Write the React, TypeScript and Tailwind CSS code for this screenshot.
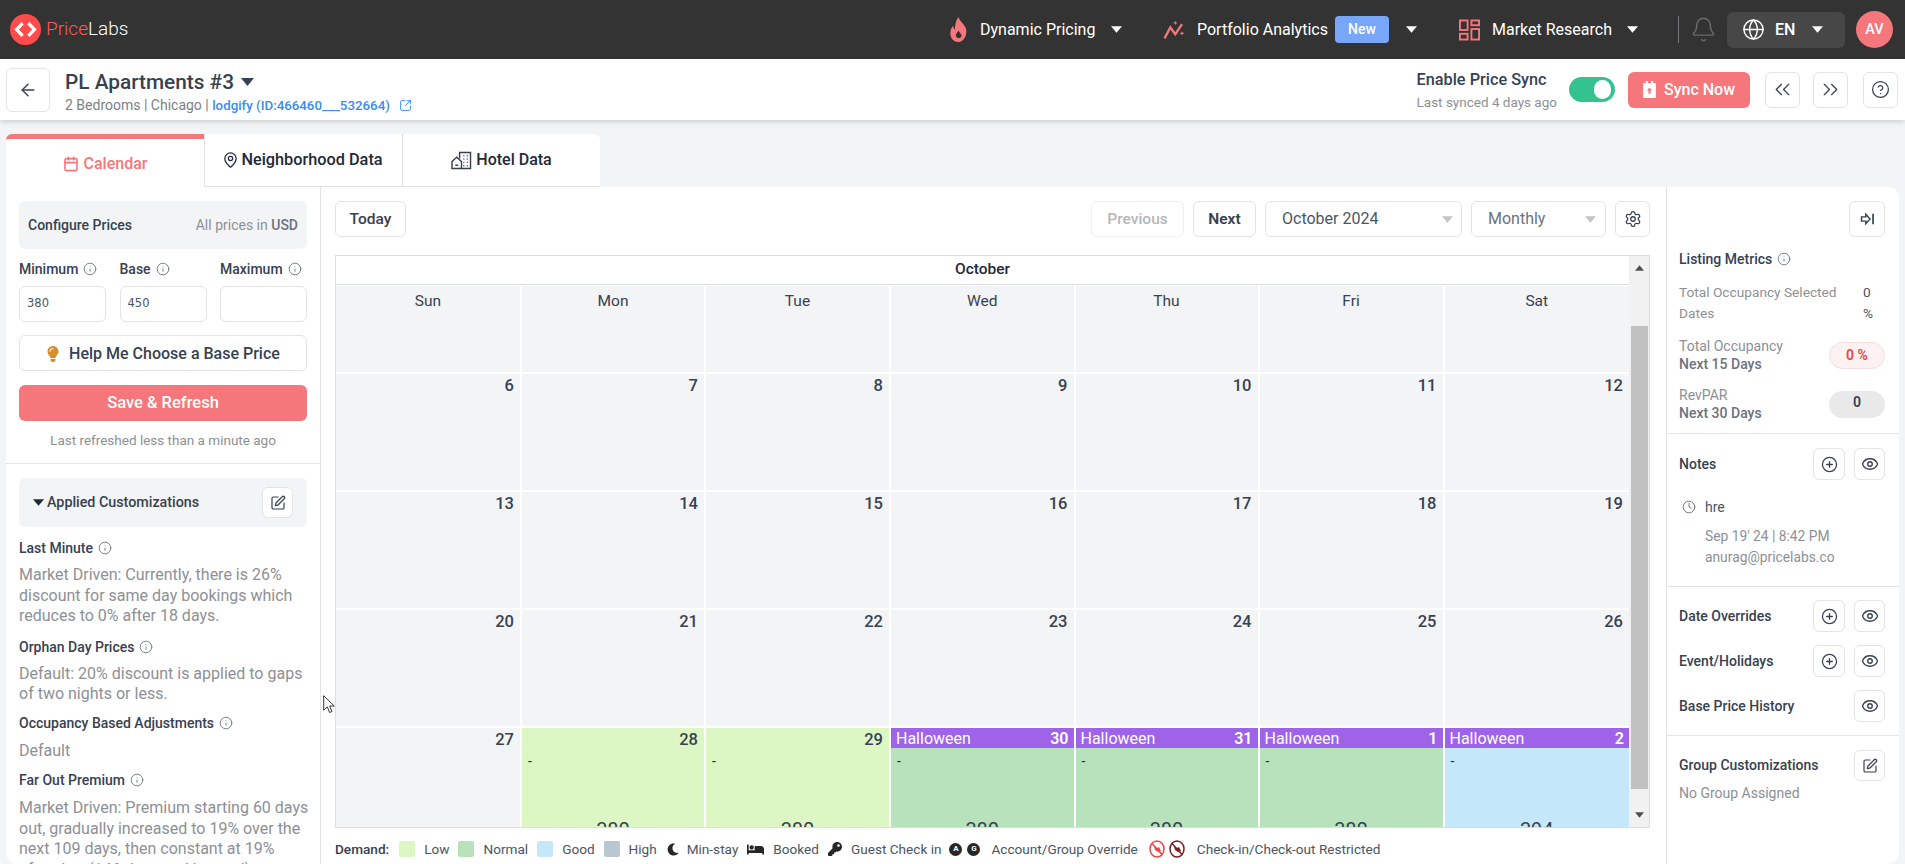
import React from "react";
import { ArrowLeft, SquareArrowOutUpRight, Calendar, MapPin, Info, SquarePen, Bell, Globe, ChevronsLeft, ChevronsRight, CircleHelp, Settings, CirclePlus, Eye, Clock } from "lucide-react";
import { FaLightbulb, FaMoon, FaBed, FaKey } from "react-icons/fa";

const Caret = ({ className = "" }: { className?: string }) => (
  <svg viewBox="0 0 10 6" className={`h-[7px] w-[11px] ${className}`} fill="currentColor"><polygon points="0,0 10,0 5,6" /></svg>
);

const Btn = ({ children, className = "" }: { children?: React.ReactNode; className?: string }) => (
  <div className={`flex items-center justify-center rounded-md border border-[#e2e3e5] bg-white text-[#374151] ${className}`}>{children}</div>
);

const InfoI = ({ className = "" }: { className?: string }) => <Info className={`h-[14px] w-[14px] text-[#6b7280] ${className}`} strokeWidth={1.5} />;

const Label = ({ children, info = true, className = "" }: { children: React.ReactNode; info?: boolean; className?: string }) => (
  <div className={`flex items-center gap-[5px] text-[14px] font-medium leading-[18px] text-[#374151] ${className}`}>
    <span>{children}</span>
    {info && <InfoI />}
  </div>
);

const Para = ({ children, className = "" }: { children: React.ReactNode; className?: string }) => (
  <p className={`whitespace-nowrap text-[16px] leading-[20.5px] text-[#8d9096] ${className}`}>{children}</p>
);

const PriceInput = ({ value }: { value?: string }) => (
  <div className="flex h-[36px] w-[87px] items-center rounded-md border border-[#e2e3e5] pl-[7px] font-['DejaVu_Sans',sans-serif] text-[11.5px] text-[#4b5563]">{value}</div>
);

const AddBtn = () => (
  <Btn className="h-[32px] w-[32px]"><CirclePlus className="h-[17px] w-[17px]" strokeWidth={1.8} /></Btn>
);
const EyeBtn = () => (
  <Btn className="h-[32px] w-[31px]"><Eye className="h-[18px] w-[18px]" strokeWidth={1.8} /></Btn>
);

type Cell = { n?: number; bg?: string; holiday?: boolean; price?: string };
const gray = "bg-[#f3f4f6]";
const low = "bg-[#ddf7c4]";
const normal = "bg-[#b8e2bb]";
const good = "bg-[#c5e7fa]";

const weeks: Cell[][] = [
  [6, 7, 8, 9, 10, 11, 12].map((n) => ({ n })),
  [13, 14, 15, 16, 17, 18, 19].map((n) => ({ n })),
  [20, 21, 22, 23, 24, 25, 26].map((n) => ({ n })),
  [
    { n: 27 },
    { n: 28, bg: low, price: "380" },
    { n: 29, bg: low, price: "380" },
    { n: 30, bg: normal, holiday: true, price: "380" },
    { n: 31, bg: normal, holiday: true, price: "380" },
    { n: 1, bg: normal, holiday: true, price: "380" },
    { n: 2, bg: good, holiday: true, price: "394" },
  ],
];

const DayCell = ({ c }: { c: Cell }) => (
  <div className={`overflow-hidden ${c.bg ?? gray}`}>
    {c.holiday ? (
      <div className="flex h-[20px] items-center justify-between bg-[#9f63ea] pl-[5px] pr-[5px] pt-[1px] text-[16px] text-white">
        <span>Halloween</span>
        <span className="font-semibold">{c.n}</span>
      </div>
    ) : (
      <div className="h-[20px] pr-[6px] pt-[1px] text-right text-[16.5px] font-medium leading-[22px] text-[#374151]">{c.n}</div>
    )}
    {c.price && (
      <>
        <div className="h-[18px] pl-[6px] pt-[4px] text-[14px] leading-[18px] text-[#1f2937]">-</div>
        <div className="mt-[52px] text-center text-[20px] leading-[24px] text-[#374151]">{c.price}</div>
      </>
    )}
  </div>
);

const Swatch = ({ className }: { className: string }) => <span className={`h-[16px] w-[16px] rounded-[2px] ${className}`} />;

const Logo = () => (
  <svg viewBox="0 0 32 32" className="h-[31px] w-[31px]">
    <circle cx="16" cy="16" r="16" fill="#ff4b4b" />
    <path d="M13 9.500 6.800 16l6.200 6.500" fill="none" stroke="#fff" strokeWidth="3.400" />
    <path d="M19 9.500 25.200 16 19 22.500" fill="none" stroke="#fff" strokeWidth="3.400" />
  </svg>
);

const FlameIcon = () => (
  <svg viewBox="0 0 20 28" className="h-[25px] w-[19px]" fill="#f5767b">
    <path d="M10 0c1 5 7 8 8.500 13.500C20 20 16 28 10 28S0 23 1 16c.4-3 2-5 3-6 .3 2 1 3.500 2 4C6 9 7 4 10 0Zm0 15c-1 2-3 3.500-3 6a3.300 3.300 0 0 0 6.500 0c0-2.500-2.500-3.500-3.500-6Z" fillRule="evenodd" />
  </svg>
);
const SparkIcon = () => (
  <svg viewBox="0 0 26 24" className="h-[20px] w-[25px]" fill="none" stroke="#f5767b" strokeWidth="2.800">
    <path d="M1 22 8 9l6 8 8-12" />
    <path d="M14 1.500v4M12 3.500h4M22 14v4M20 16h4" strokeWidth="1.300" />
  </svg>
);
const MarketIcon = () => (
  <svg viewBox="0 0 22 22" className="h-[22px] w-[21px]" fill="none" stroke="#f5767b" strokeWidth="2">
    <rect x="1" y="1" width="8" height="10" />
    <rect x="13" y="1" width="8" height="5" />
    <rect x="1" y="15" width="8" height="6" />
    <rect x="13" y="10" width="8" height="11" />
  </svg>
);
const HotelIcon = () => (
  <svg viewBox="0 0 22 20" className="h-[19px] w-[21px]" fill="none" stroke="#374151" strokeWidth="1.500">
    <path d="M1 18.500V11l5-4.500L11 11v7.500Z" />
    <path d="M9 8V1.500h11.500v17H11" />
    <path d="M13 5h1M16.500 5h1M13 8.500h1M16.500 8.500h1M13 12h1M16.500 12h1M13 15.500h1M16.500 15.500h1M4.500 15h3" />
  </svg>
);
const CollapseIcon = () => (
  <svg viewBox="0 0 16 14" className="h-[12px] w-[15px]" fill="none" stroke="#374151" strokeWidth="1.700">
    <path d="M1 4.500h5V1.500L11 7l-5 5.500V9.500H1Z" />
    <path d="M14.500 1v12" strokeWidth="2" />
  </svg>
);
const SyncIcon = () => (
  <svg viewBox="0 0 12 16" className="h-[17px] w-[13px]">
    <path d="M2.500 0h2v2h3V0h2v2H12v14H0V2h2.500Z" fill="#fff" />
    <path d="M6 6 3.500 9H5v3h2V9h1.500Z" fill="#f5767b" />
  </svg>
);
const NoIcon = ({ color }: { color: string }) => (
  <svg viewBox="0 0 16 18" className="h-[18px] w-[16px]" fill="none" stroke={color} strokeWidth="1.500">
    <ellipse cx="8" cy="9" rx="7" ry="8" />
    <path d="M3 3.500l10 11" />
    <path d="M5 6l3 2 2-1 2 4-3 1-3-2Z" fill={color} stroke="none" />
  </svg>
);
const Letter = ({ l }: { l: string }) => (
  <span className="flex h-[13px] w-[13px] items-center justify-center rounded-full bg-[#27272a] text-[8px] font-bold leading-none text-white">{l}</span>
);

export default function App() {
  return (
    <div className="relative flex h-[864px] w-[1905px] flex-col overflow-hidden bg-[#f3f4f6] font-['Roboto',sans-serif] text-[#374151]">
      {/* top navigation */}
      <div className="flex h-[59px] shrink-0 items-center bg-[#333333] pl-[10px] text-white">
        <Logo />
        <span className="ml-[5px] w-[84px] text-[19px] font-light"><span className="text-[#ff5a5a]">Price</span>Labs</span>
        <div className="ml-[819px] flex items-center">
          <FlameIcon />
          <span className="ml-[12px] w-[120px] text-[16px]">Dynamic Pricing</span>
          <Caret className="ml-[11px]" />
          <div className="ml-[40px]"><SparkIcon /></div>
          <span className="ml-[10px] w-[130px] whitespace-nowrap text-[16px]">Portfolio Analytics</span>
          <span className="ml-[8px] flex h-[27px] w-[54px] items-center justify-center rounded-[4px] bg-[#78a6f8] text-[14px] font-medium">New</span>
          <Caret className="ml-[17px]" />
          <div className="ml-[42px]"><MarketIcon /></div>
          <span className="ml-[12px] w-[120px] text-[16px]">Market Research</span>
          <Caret className="ml-[15px]" />
          <div className="ml-[40px] h-[27px] w-px bg-[#77797c]" />
          <Bell className="ml-[11px] h-[27px] w-[27px] text-[#6b6b6b]" strokeWidth={1.3} />
          <div className="ml-[10px] flex h-[36px] w-[118px] items-center rounded-md bg-[#474747] pl-[15px]">
            <Globe className="h-[23px] w-[23px]" strokeWidth={1.5} />
            <span className="ml-[10px] text-[16px] font-medium">EN</span>
            <Caret className="ml-[17px]" />
          </div>
          <div className="ml-[11px] flex h-[37px] w-[37px] items-center justify-center rounded-full bg-[#f5767b] text-[14.5px] font-medium">AV</div>
        </div>
      </div>

      {/* listing header */}
      <div className="z-10 flex h-[61px] shrink-0 items-center bg-white pl-[6px] shadow-[0_2px_5px_rgba(0,0,0,0.15)]">
        <Btn className="h-[44px] w-[44px]"><ArrowLeft className="h-[20px] w-[20px]" strokeWidth={1.7} /></Btn>
        <div className="ml-[15px] pt-[4px]">
          <div className="flex items-center text-[20.8px] font-medium leading-[28px] text-[#374151]">
            PL Apartments #3 <Caret className="ml-[7px] h-[8px] w-[13px]" />
          </div>
          <div className="flex items-center text-[14px] leading-[19px] text-[#7b7f85]">
            2 Bedrooms | Chicago |&nbsp;<span className="text-[13.3px] font-medium text-[#3b8bf0]">lodgify (ID:466460___532664)</span>
            <SquareArrowOutUpRight className="ml-[9px] h-[13px] w-[13px] text-[#3b8bf0]" strokeWidth={1.8} />
          </div>
        </div>
        <div className="ml-auto flex items-center pr-[7px]">
          <div className="mr-[12px]">
            <div className="text-[16.3px] font-medium leading-[22px] text-[#374151]">Enable Price Sync</div>
            <div className="mt-[2px] text-[13.5px] leading-[18px] text-[#8d9096]">Last synced 4 days ago</div>
          </div>
          <div className="flex h-[25px] w-[46px] items-center justify-end rounded-full bg-[#34c38f] pr-[4px]"><span className="h-[19px] w-[17px] rounded-full bg-white" /></div>
          <div className="ml-[13px] flex h-[36px] w-[122px] items-center justify-center gap-[8px] rounded-md bg-[#f5767b] text-[16px] font-medium text-white">
            <SyncIcon /> Sync Now
          </div>
          <Btn className="ml-[15px] h-[36px] w-[35px]"><ChevronsLeft className="h-[25px] w-[25px]" strokeWidth={1.2} /></Btn>
          <Btn className="ml-[13px] h-[36px] w-[35px]"><ChevronsRight className="h-[25px] w-[25px]" strokeWidth={1.2} /></Btn>
          <Btn className="ml-[15px] h-[36px] w-[35px]"><CircleHelp className="h-[19px] w-[19px]" strokeWidth={1.6} /></Btn>
        </div>
      </div>

      {/* tabs */}
      <div className="ml-[6px] mt-[14px] flex h-[53px] shrink-0">
        <div className="flex w-[198px] items-center justify-center gap-[5px] rounded-tl-md border-t-[5px] border-[#f5767b] bg-white pt-[1px] text-[16px] font-medium text-[#f5767b]">
          <Calendar className="h-[18px] w-[16px]" strokeWidth={2.4} /> Calendar
        </div>
        <div className="flex w-[198px] items-center justify-center gap-[2px] border-b border-l border-[#e2e3e5] bg-white pr-[2px] text-[16.3px] font-medium text-[#1f2937]">
          <MapPin className="h-[20px] w-[17px]" strokeWidth={1.8} /> Neighborhood Data
        </div>
        <div className="flex w-[198px] items-center justify-center gap-[4px] rounded-tr-md border-b border-l border-[#e2e3e5] bg-white text-[16px] font-medium text-[#1f2937]">
          <HotelIcon /> Hotel Data
        </div>
      </div>

      {/* panels */}
      <div className="ml-[6px] flex h-[677px] w-[1893px] shrink-0 overflow-hidden rounded-b-xl rounded-tr-xl bg-white">
        {/* left */}
        <div className="w-[315px] shrink-0 border-r border-[#e2e3e5] pt-[14px]">
          <div className="px-[13px]">
            <div className="flex h-[48px] items-center justify-between rounded-md bg-[#f3f4f6] px-[9px] text-[14px]">
              <span className="font-medium">Configure Prices</span>
              <span className="text-[#8d9096]">All prices in <span className="font-medium text-[#6b7280]">USD</span></span>
            </div>
            <div className="mt-[11px] flex justify-between">
              {[["Minimum", "380"], ["Base", "450"], ["Maximum", undefined]].map(([l, v]) => (
                <div key={l} className="w-[87px]">
                  <Label className="h-[18px]">{l}</Label>
                  <div className="mt-[8px]"><PriceInput value={v} /></div>
                </div>
              ))}
            </div>
            <Btn className="mt-[13px] h-[36px] gap-[9px] pt-[1px] text-[16px] font-medium">
              <FaLightbulb className="h-[16px] w-[14px] text-[#d98e2b]" /> Help Me Choose a Base Price
            </Btn>
            <div className="mt-[14px] flex h-[36px] items-center justify-center rounded-md bg-[#f5767b] text-[16.5px] font-medium text-white">Save &amp; Refresh</div>
            <div className="mt-[10px] text-center text-[13.5px] leading-[18px] text-[#8d9096]">Last refreshed less than a minute ago</div>
          </div>
          <div className="mt-[14px] border-t border-[#e2e3e5] px-[13px] pt-[14px]">
            <div className="flex h-[49px] items-center rounded-md bg-[#f3f4f6] pl-[14px] pr-[14px]">
              <Caret className="h-[6px] w-[10px] text-[#1f2937]" />
              <span className="ml-[3px] text-[14.3px] font-medium">Applied Customizations</span>
              <Btn className="ml-auto h-[31px] w-[31px]"><SquarePen className="h-[16px] w-[16px]" strokeWidth={1.8} /></Btn>
            </div>
            <Label className="mt-[12px]">Last Minute</Label>
            <Para className="mt-[8px]">Market Driven: Currently, there is 26%<br />discount for same day bookings which<br />reduces to 0% after 18 days.</Para>
            <Label className="mt-[11px]">Orphan Day Prices</Label>
            <Para className="mt-[8px]">Default: 20% discount is applied to gaps<br />of two nights or less.</Para>
            <Label className="mt-[9px]">Occupancy Based Adjustments</Label>
            <Para className="mt-[9px]">Default</Para>
            <Label className="mt-[10px]">Far Out Premium</Label>
            <Para className="mt-[9px]">Market Driven: Premium starting 60 days<br />out, gradually increased to 19% over the<br />next 109 days, then constant at 19%<br />after that (146 days and beyond).</Para>
          </div>
        </div>

        {/* center */}
        <div className="w-[1346px] shrink-0 border-r border-[#e2e3e5] pl-[14px] pr-[16px] pt-[14px]">
          <div className="flex h-[36px] items-center">
            <Btn className="h-[36px] w-[71px] pt-[1px] text-[15.5px] font-medium text-[#1f2937]">Today</Btn>
            <Btn className="ml-auto h-[36px] w-[93px] border-[#eeeff0] pt-[1px] text-[15.5px] font-medium text-[#b4b6ba]">Previous</Btn>
            <Btn className="ml-[9px] h-[36px] w-[63px] pt-[1px] text-[15.5px] font-semibold text-[#1f2937]">Next</Btn>
            <div className="ml-[9px] flex h-[36px] w-[197px] items-center justify-between rounded-md border border-[#e2e3e5] pl-[16px] pr-[8px] text-[16px] text-[#4b5563]">
              October 2024 <Caret className="text-[#c4c5c8]" />
            </div>
            <div className="ml-[9px] flex h-[36px] w-[135px] items-center justify-between rounded-md border border-[#e2e3e5] pl-[16px] pr-[9px] text-[16px] text-[#6b7280]">
              Monthly <Caret className="text-[#c4c5c8]" />
            </div>
            <Btn className="ml-[9px] h-[36px] w-[35px]"><Settings className="h-[18px] w-[18px]" strokeWidth={1.7} /></Btn>
          </div>

          <div className="mt-[18px] flex h-[573px] w-[1315px] overflow-hidden border border-[#dcdddf]">
            <div className="w-[1293px] shrink-0 overflow-hidden">
              <div className="flex h-[29px] items-center justify-center border-b border-[#dcdddf] bg-white text-[15.5px] font-medium text-[#1f2937]">October</div>
              <div className="grid grid-cols-[184px_182px_183px_182.5px_182px_183px_184.5px] gap-[2px] bg-white pt-[1px] [grid-template-rows:86px_116px_116px_116px_116px]">
                {["Sun", "Mon", "Tue", "Wed", "Thu", "Fri", "Sat"].map((d) => (
                  <div key={d} className="bg-[#f3f4f6] pt-[5px] text-center text-[15.5px] leading-[20px] text-[#374151]">{d}</div>
                ))}
                {weeks.flat().map((c, i) => <DayCell key={i} c={c} />)}
              </div>
            </div>
            <div className="flex w-[20px] shrink-0 flex-col items-center bg-[#f1f1f1]">
              <svg viewBox="0 0 10 6" className="mt-[9px] h-[6px] w-[9px]" fill="#505050"><polygon points="0,6 10,6 5,0" /></svg>
              <div className="mt-[55px] h-[463px] w-[17px] bg-[#c1c1c1]" />
              <svg viewBox="0 0 10 6" className="mt-[23px] h-[6px] w-[9px]" fill="#505050"><polygon points="0,0 10,0 5,6" /></svg>
            </div>
          </div>

          <div className="mt-[12px] flex h-[18px] items-center text-[13.6px] text-[#4b5563]">
            <span className="font-medium text-[#374151]">Demand:</span>
            <Swatch className="ml-[10px] bg-[#ddf7c4]" />
            <span className="ml-[9px]">Low</span>
            <Swatch className="ml-[9px] bg-[#b8e2bb]" />
            <span className="ml-[9px]">Normal</span>
            <Swatch className="ml-[9px] bg-[#c5e7fa]" />
            <span className="ml-[9px]">Good</span>
            <Swatch className="ml-[9px] bg-[#b8c7d1]" />
            <span className="ml-[9px]">High</span>
            <FaMoon className="ml-[10px] h-[13px] w-[12px] text-[#27272a]" />
            <span className="ml-[8px]">Min-stay</span>
            <FaBed className="ml-[9px] h-[15px] w-[17px] text-[#27272a]" />
            <span className="ml-[9px]">Booked</span>
            <FaKey className="ml-[9px] h-[14px] w-[14px] text-[#27272a]" />
            <span className="ml-[9px]">Guest Check in</span>
            <span className="ml-[8px] flex gap-[5px]"><Letter l="A" /><Letter l="G" /></span>
            <span className="ml-[11px]">Account/Group Override</span>
            <span className="ml-[11px]"><NoIcon color="#ef4444" /></span>
            <span className="ml-[4px]"><NoIcon color="#7f1d1d" /></span>
            <span className="ml-[12px]">Check-in/Check-out Restricted</span>
          </div>
        </div>

        {/* right */}
        <div className="w-[232px] shrink-0 pt-[14px] text-[14px]">
          <div className="pl-[12px] pr-[14px]">
            <div className="flex justify-end"><Btn className="h-[36px] w-[36px]"><CollapseIcon /></Btn></div>
            <Label className="mt-[13px]">Listing Metrics</Label>
            <div className="mt-[14px] flex justify-between text-[13.7px] leading-[21px] text-[#8d9096]">
              <span className="w-[165px]">Total Occupancy Selected Dates</span>
              <span className="mr-[10px] w-[12px] text-[#4b5563]">0<br />%</span>
            </div>
            <div className="mt-[13px] flex items-center justify-between">
              <div className="text-[14px] leading-[18px] text-[#8d9096]">Total Occupancy<div className="font-medium text-[#6b7280]">Next 15 Days</div></div>
              <span className="flex h-[27px] w-[56px] items-center justify-center rounded-full border border-[#f6dede] bg-[#fdf1f1] font-semibold text-[#ef4444]">0 %</span>
            </div>
            <div className="mt-[13px] flex items-center justify-between">
              <div className="text-[14px] leading-[18px] text-[#8d9096]">RevPAR<div className="font-medium text-[#6b7280]">Next 30 Days</div></div>
              <span className="flex h-[27px] w-[56px] items-center justify-center rounded-full bg-[#e9e9ea] pb-[4px] font-semibold text-[#374151]">0</span>
            </div>
          </div>
          <div className="mt-[11px] border-t border-[#e2e3e5] px-[12px] pr-[14px] pt-[14px]">
            <div className="flex items-center">
              <span className="font-medium">Notes</span>
              <span className="ml-auto"><AddBtn /></span>
              <span className="ml-[9px]"><EyeBtn /></span>
            </div>
            <div className="mt-[18px] flex items-center pl-[3px] text-[#6b7280]">
              <Clock className="h-[14px] w-[14px] text-[#6b7280]" strokeWidth={1.6} />
              <span className="ml-[9px] leading-[18px] text-[#4b5563]">hre</span>
            </div>
            <div className="ml-[26px] mt-[10px] text-[13.8px] leading-[21px] text-[#8d9096]">Sep 19' 24 | 8:42 PM<br />anurag@pricelabs.co</div>
            <div className="h-[18px]" />
          </div>
          <div className="border-t border-[#e2e3e5] pl-[12px] pr-[14px] pt-[13px]">
            <div className="flex items-center"><span className="font-medium">Date Overrides</span><span className="ml-auto"><AddBtn /></span><span className="ml-[9px]"><EyeBtn /></span></div>
            <div className="mt-[13px] flex items-center"><span className="font-medium">Event/Holidays</span><span className="ml-auto"><AddBtn /></span><span className="ml-[9px]"><EyeBtn /></span></div>
            <div className="mt-[13px] flex items-center"><span className="font-medium">Base Price History</span><span className="ml-auto"><EyeBtn /></span></div>
          </div>
          <div className="mt-[13px] border-t border-[#e2e3e5] pl-[12px] pr-[14px] pt-[14px]">
            <div className="flex items-center"><span className="font-medium">Group Customizations</span><Btn className="ml-auto h-[31px] w-[31px]"><SquarePen className="h-[16px] w-[16px]" strokeWidth={1.8} /></Btn></div>
            <div className="mt-[3px] leading-[18px] text-[#8d9096]">No Group Assigned</div>
          </div>
        </div>
      </div>

      {/* mouse pointer */}
      <svg viewBox="0 0 12 19" className="absolute left-[323px] top-[695px] h-[19px] w-[12px]" fill="#fff" stroke="#333" strokeWidth="1">
        <path d="M.7.7v14.500l3.600-3.300 2.300 5.600 2.300-1-2.300-5.500h4.700Z" />
      </svg>
    </div>
  );
}
